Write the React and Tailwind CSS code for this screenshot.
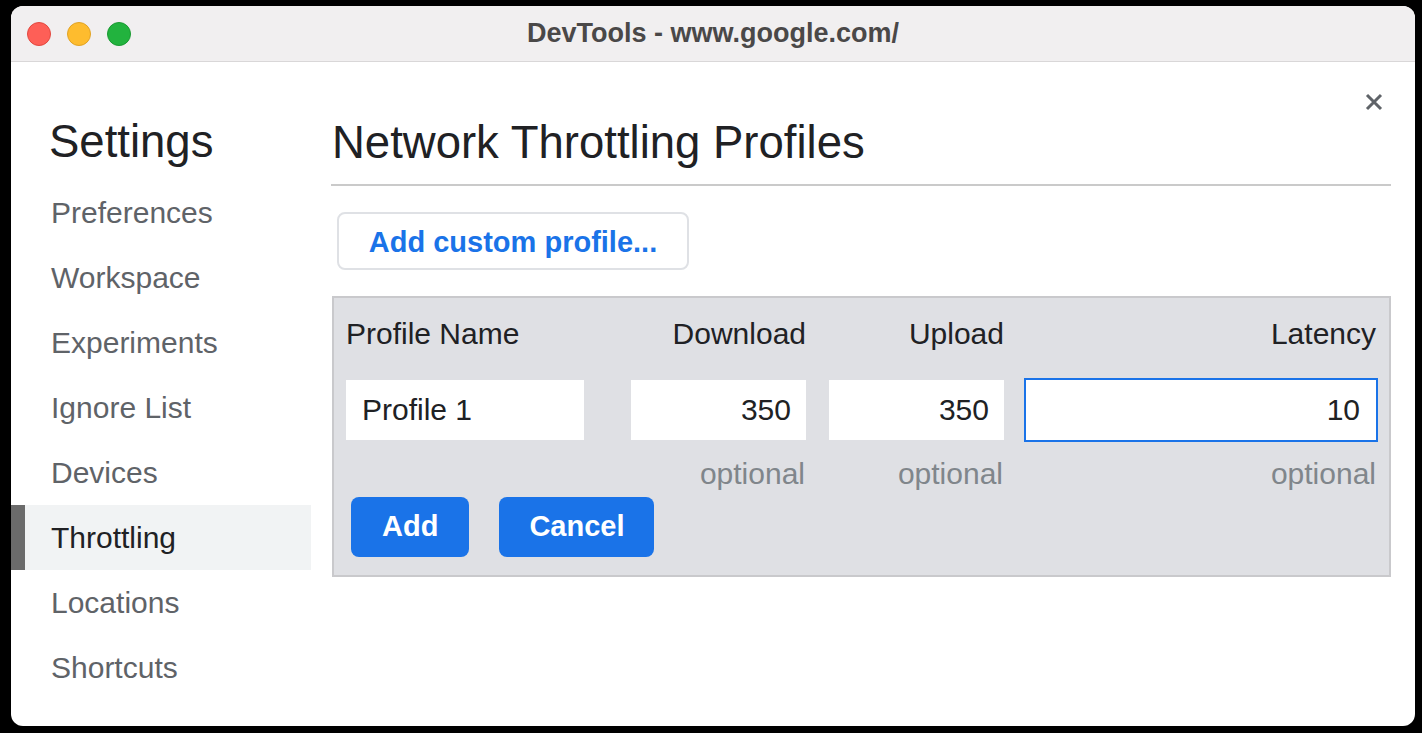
import { useState } from "react";

const font = { fontFamily: '"Liberation Sans", Arial, sans-serif' };

const navItems = [
  "Preferences",
  "Workspace",
  "Experiments",
  "Ignore List",
  "Devices",
  "Throttling",
  "Locations",
  "Shortcuts",
];

function TitleBar() {
  return (
    <div className="relative flex items-center h-[56px] bg-[#f1eff0] border-b border-[#d9d7d8]">
      <div className="flex items-center gap-[16px] pl-[16px]">
        <span className="w-[24px] h-[24px] rounded-full bg-[#fe5f57] border border-[#e2483f]" />
        <span className="w-[24px] h-[24px] rounded-full bg-[#febc2e] border border-[#e1a324]" />
        <span className="w-[24px] h-[24px] rounded-full bg-[#22b33e] border border-[#1a9a32]" />
      </div>
      <div className="absolute inset-0 flex items-center justify-center pointer-events-none">
        <span className="text-[27px] font-bold text-[#4a4848]">DevTools - www.google.com/</span>
      </div>
    </div>
  );
}

function Sidebar({ active, setActive }) {
  return (
    <div className="w-[300px] shrink-0 pt-[53px]">
      <h1 className="pl-[38px] text-[45.5px] leading-[54px] h-[54px] text-[#202124] mb-[11px]">Settings</h1>
      {navItems.map((item) => (
        <div
          key={item}
          onClick={() => setActive(item)}
          className={
            item === active
              ? "flex items-center h-[65px] border-l-[14px] border-[#6b6b6b] bg-[#f1f3f4] pl-[26px] text-[30px] text-[#202124] cursor-pointer"
              : "flex items-center h-[65px] border-l-[14px] border-transparent pl-[26px] text-[30px] text-[#5f6368] cursor-pointer"
          }
        >
          {item}
        </div>
      ))}
    </div>
  );
}

function ProfileEditor() {
  const [data, setData] = useState({ name: "Profile 1", down: "350", up: "350", lat: "10" });

  return (
    <div className="mt-[26px] ml-[1px] bg-[#dfe0e4] border-2 border-[#c9c9cc] pl-[12px] pr-[13px] pt-[17px] pb-[18px]">
      <div className="flex h-[36px] items-center text-[30px] text-[#202124]">
        <div className="w-[238px] shrink-0">Profile Name</div>
        <div className="w-[175px] shrink-0 ml-[47px] text-right">Download</div>
        <div className="w-[175px] shrink-0 ml-[23px] text-right">Upload</div>
        <div className="flex-1 min-w-0 ml-[22px] text-right">Latency</div>
      </div>
      <div className="flex mt-[29px] h-[60px] text-[30px] text-[#202124]">
        <input
          style={font}
          className="w-[238px] shrink-0 h-[60px] bg-white px-[16px] outline-none"
          value={data.name}
          onChange={(e) => setData({ ...data, name: e.target.value })}
        />
        <input
          style={font}
          className="w-[175px] shrink-0 ml-[47px] h-[60px] bg-white px-[15px] text-right outline-none"
          value={data.down}
          onChange={(e) => setData({ ...data, down: e.target.value })}
        />
        <input
          style={font}
          className="w-[175px] shrink-0 ml-[23px] h-[60px] bg-white px-[15px] text-right outline-none"
          value={data.up}
          onChange={(e) => setData({ ...data, up: e.target.value })}
        />
        <input
          style={font}
          className="flex-1 min-w-0 w-0 ml-[22px] h-[60px] bg-white px-[16px] text-right outline-none shadow-[0_0_0_2px_#1a73e8]"
          value={data.lat}
          onChange={(e) => setData({ ...data, lat: e.target.value })}
        />
      </div>
      <div className="flex mt-[15px] h-[36px] items-center text-[30px] text-[#80868b]">
        <div className="w-[238px] shrink-0" />
        <div className="w-[175px] shrink-0 ml-[47px] text-right pr-[1px]">optional</div>
        <div className="w-[175px] shrink-0 ml-[23px] text-right pr-[1px]">optional</div>
        <div className="flex-1 min-w-0 ml-[22px] text-right">optional</div>
      </div>
      <div className="flex gap-[30px] mt-[6px] pl-[5px]">
        <button
          style={font}
          className="h-[60px] px-[31px] rounded-[8px] bg-[#1a73e8] text-white text-[29px] font-bold"
        >
          Add
        </button>
        <button
          style={font}
          className="h-[60px] px-[30px] rounded-[8px] bg-[#1a73e8] text-white text-[29px] font-bold"
        >
          Cancel
        </button>
      </div>
    </div>
  );
}

export default function App() {
  const [active, setActive] = useState("Throttling");

  return (
    <div style={font} className="w-[1422px] h-[733px] bg-black pl-[11px] pt-[6px]">
      <div className="relative w-[1404px] h-[720px] bg-white rounded-[12px] overflow-hidden flex flex-col">
        <TitleBar />
        <div className="flex flex-1">
          <Sidebar active={active} setActive={setActive} />
          <div className="w-[1060px] shrink-0 ml-[20px] pt-[54px]">
            <h2 className="text-[45.5px] leading-[54px] h-[54px] text-[#202124] pl-[1px]">
              Network Throttling Profiles
            </h2>
            <div className="mt-[14px] h-[2px] bg-[#cacaca]" />
            <button
              style={font}
              className="mt-[26px] ml-[6px] h-[58px] w-[352px] pt-[4px] rounded-[8px] border-2 border-[#dfe1e5] bg-white text-[29px] font-bold text-[#1a73e8]"
            >
              Add custom profile...
            </button>
            <ProfileEditor />
          </div>
        </div>
        <button className="absolute top-[87px] right-[32px] w-[18px] h-[18px] text-[#5f6368]">
          <svg viewBox="0 0 18 18" width="18" height="18">
            <path d="M2 2 L16 16 M16 2 L2 16" stroke="currentColor" strokeWidth="3" />
          </svg>
        </button>
      </div>
    </div>
  );
}
